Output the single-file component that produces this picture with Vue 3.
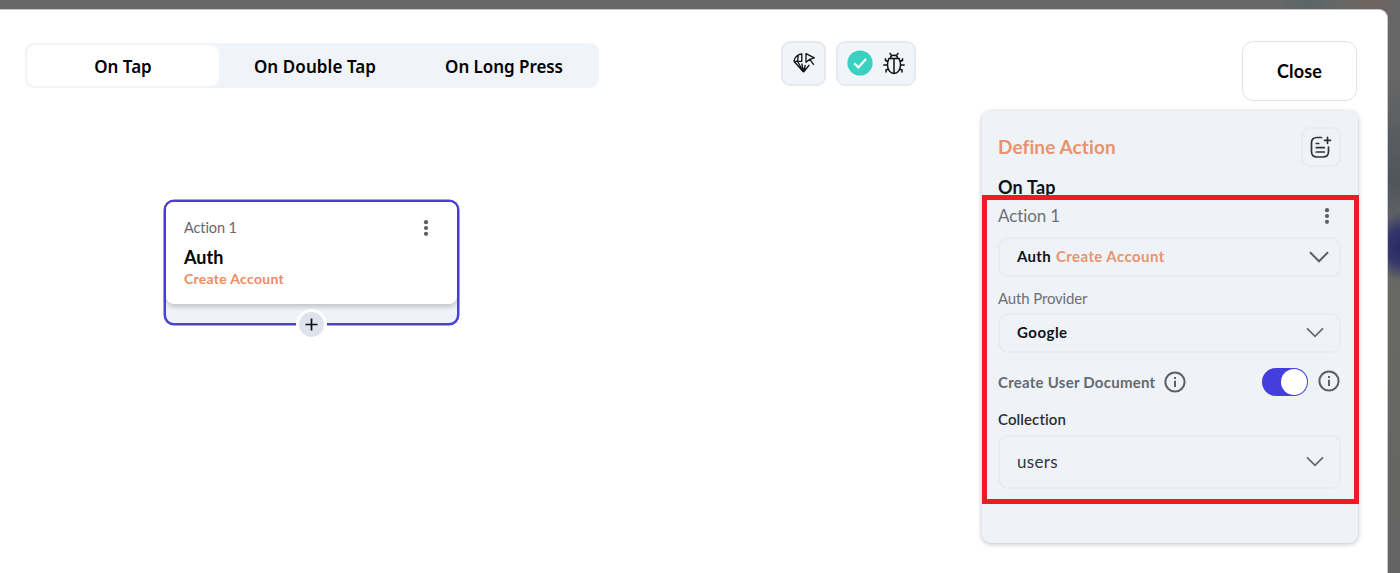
<script setup>
const tabs = ['On Tap', 'On Double Tap', 'On Long Press']
</script>

<template>
  <div class="backdrop">
    <main class="modal">
      <section class="canvas">
        <div class="toolbar">
          <nav class="tabs">
            <button v-for="(tab, i) in tabs" :key="tab" :class="['tab', 'tab-' + i, { active: i === 0 }]"><span>{{ tab }}</span></button>
          </nav>
          <button class="tool single">
            <svg width="24" height="24" viewBox="0 0 24 24" fill="none" stroke="#111" stroke-width="1.300" stroke-linejoin="round">
              <path d="M9.800 10.300V3C5.600 3.300 2.600 6.500 2 10.300zM6.300 4.600 5.500 10.300M2 10.300 11.500 21M5.500 10.300 11.500 21M9.800 12.500l1.700 8.500M13.300 14 11.500 21M17.300 14 11.500 21" />
              <path d="M14 2.700 22.300 6.900 17.800 8.300 14 11.300zM17.800 8.300 21.800 13.800" />
              <path d="M8 17.300 11.500 18l3.500-.7-3.500 4.200z" fill="#111" stroke="none" />
            </svg>
          </button>
          <div class="tool status">
            <svg width="26" height="26" viewBox="0 0 26 26" fill="none">
              <circle cx="13" cy="13" r="12.600" fill="#39d2c0" />
              <path d="M7.200 13.200l4.200 4.200 7.600-8.300" stroke="#fff" stroke-width="2.200" />
            </svg>
            <svg width="24" height="24" viewBox="0 0 24 24" fill="none" stroke="#111" stroke-width="1.500" stroke-linecap="round">
              <path d="M7 7.500h10c1.400 2.300 1.500 4.600 1.500 6.500 0 5-3 8.500-6.500 8.500S5.500 19 5.500 14c0-1.900.1-4.200 1.500-6.500zM8.500 7.300C8.500 5.200 9.700 4.300 12 4.300s3.500.9 3.500 3M12 8v14M9.500 4.500 8 2.300M14.500 4.500 16 2.300M5.800 10.500 3.500 9.500V7.800M18.200 10.500l2.300-1V7.800M5.500 14H1.800M18.500 14h3.700M6.500 18 4 19v2M17.500 18l2.500 1v2" />
            </svg>
          </div>
        </div>

        <article class="node">
          <div class="node-card">
            <div class="node-top">
              <span class="node-index">Action 1</span>
              <svg width="6" height="18" viewBox="0 0 6 18" fill="#5c6066"><circle cx="3" cy="3.200" r="2.100" /><circle cx="3" cy="9" r="2.100" /><circle cx="3" cy="14.800" r="2.100" /></svg>
            </div>
            <div class="node-title"><span>Auth</span></div>
            <div class="node-sub"><span>Create Account</span></div>
          </div>
          <button class="add">
            <svg width="13" height="13" viewBox="0 0 13 13" stroke="#111" stroke-width="1.700"><path d="M6.500 .5v12M.5 6.500h12" /></svg>
          </button>
        </article>
      </section>

      <aside class="side">
        <button class="close"><span>Close</span></button>
        <div class="panel">
          <header class="panel-head">
            <h2>Define Action</h2>
            <button class="doc">
              <svg width="22" height="24" viewBox="0 0 22 24" fill="none" stroke="#303236" stroke-width="1.700" stroke-linecap="round">
                <path d="M11.500 2.500H7C3.200 2.500 1.500 4.300 1.500 8v8.500C1.500 20.400 3.200 22 7 22h6c3.700 0 5.500-1.600 5.500-5.500V12M17.500 2.300v6M14.500 5.300h6M6.300 8.500h2.400M6.300 12.700h8M6.300 17h8" />
              </svg>
            </button>
          </header>
          <div class="trigger"><span>On Tap</span></div>
          <div class="action-row">
            <span>Action 1</span>
            <svg width="6" height="18" viewBox="0 0 6 18" fill="#5c6066"><circle cx="3" cy="3.200" r="2.100" /><circle cx="3" cy="9" r="2.100" /><circle cx="3" cy="14.800" r="2.100" /></svg>
          </div>
          <div class="select first">
            <div class="value"><span class="v-auth">Auth</span><span class="v-create">Create Account</span></div>
            <svg width="20" height="12" viewBox="0 0 20 12" fill="none" stroke="#5c6066" stroke-width="2"><path d="M1 1.300l9 9 9-9" /></svg>
          </div>
          <div class="label provider"><span>Auth Provider</span></div>
          <div class="select">
            <span class="v-google">Google</span>
            <svg width="18" height="11" viewBox="0 0 18 11" fill="none" stroke="#66696e" stroke-width="1.800"><path d="M1 1.300l8 8 8-8" /></svg>
          </div>
          <div class="toggle-row">
            <span class="t-label">Create User Document</span>
            <svg class="info" width="22" height="22" viewBox="0 0 22 22" fill="none" stroke="#5c6066" stroke-width="2"><circle cx="11" cy="11" r="9.600" /><path d="M11 9.700v6.300M11 5.900v2" /></svg>
            <div class="switch"><i /></div>
            <svg class="info end" width="22" height="22" viewBox="0 0 22 22" fill="none" stroke="#5c6066" stroke-width="2"><circle cx="11" cy="11" r="9.600" /><path d="M11 9.700v6.300M11 5.900v2" /></svg>
          </div>
          <div class="label collection"><span>Collection</span></div>
          <div class="select tall">
            <span class="v-users">users</span>
            <svg width="18" height="11" viewBox="0 0 18 11" fill="none" stroke="#66696e" stroke-width="1.800"><path d="M1 1.300l8 8 8-8" /></svg>
          </div>
          <div class="highlight" />
        </div>
      </aside>
    </main>
  </div>
</template>

<style>
body { margin: 0; overflow: hidden; }
</style>

<style scoped>
* { box-sizing: border-box; }
button { border: 0; padding: 0; margin: 0; background: none; font: inherit; color: inherit; }
svg { display: block; flex: none; }
span { white-space: nowrap; }
.backdrop {
  width: 1400px; height: 573px; padding: 9px 12px 0 0; overflow: hidden;
  font-family: Lato, "Liberation Sans", sans-serif; font-variant-ligatures: none; color: #111417;
  background:
    radial-gradient(ellipse 24px 34px at 1400px 246px, #292a62 0, #34356a 50%, transparent 100%),
    radial-gradient(ellipse 30px 16px at 1310px 3px, #596565, transparent),
    radial-gradient(ellipse 30px 16px at 1370px 3px, #70645e, transparent),
    linear-gradient(180deg, #676767 0, #666 80px, #50555a 180px, #636468 225px, #686864 300px, #646464 100%);
}
.modal {
  display: flex; width: 1388px; height: 564px; background: #fff;
  border-top: 1px solid #c9c9ca; border-right: 1px solid #c9caca; border-radius: 0 9px 0 0;
}
.canvas { width: 982px; padding: 31px 0 0 25px; }
.toolbar { display: flex; align-items: flex-start; }
.tabs {
  display: flex; width: 574px; height: 45px; margin: 2px 182px 0 0; padding: 2px;
  background: #f0f3f8; border-radius: 9px;
  font-family: "Noto Sans", sans-serif; font-weight: 600; font-size: 17px; color: #000;
}
.tab { display: flex; align-items: center; justify-content: center; width: 189px; height: 41px; padding-top: 2px; border-radius: 8px; }
.tab.active { width: 192px; background: #fff; }
.tab-1 { padding-left: 3px; letter-spacing: .08px; }
.tab-2 { padding-left: 3px; letter-spacing: -.05px; }
.tool { display: flex; align-items: center; justify-content: center; height: 45px; padding-bottom: 1px; border: 2px solid #e6eaee; border-radius: 9px; background: #f1f4f8; }
.single { width: 45px; margin-right: 10px; }
.status { width: 80px; gap: 9px; }
.node {
  position: relative; width: 295px; height: 125px; margin: 112px 0 0 139px;
  border: 2px solid #4b42d4; border-radius: 10px; background: #eff2f8;
  box-shadow: 0 0 0 .500px #4b42d4;
}
.node-card { height: 102px; padding: 17px 28px 0 18px; border-radius: 8px; background: #fff; box-shadow: 0 3px 5px rgba(0, 0, 0, .19); }
.node-top { display: flex; justify-content: space-between; align-items: center; height: 18px; }
.node-index { padding-bottom: 2px; font-size: 14.500px; letter-spacing: -.1px; color: #64676d; }
.node-title { height: 32px; padding-top: 6px; font-size: 18px; line-height: 28px; font-weight: 700; color: #000; }
.node-sub { height: 18px; line-height: 19px; font-size: 14px; letter-spacing: .28px; font-weight: 700; color: #ee8b60; }
.add {
  position: absolute; left: 130px; top: 107px; display: flex; align-items: center; justify-content: center;
  width: 31px; height: 31px; border: 3px solid #fff; border-radius: 50%; background: #dfe3eb;
}
.side { width: 376px; padding-top: 31px; }
.close { display: flex; align-items: center; justify-content: center; width: 115px; height: 60px; margin: 0 0 10px 260px; border: 1px solid #e2e3e9; border-radius: 11px; font-size: 18px; letter-spacing: .2px; font-weight: 700; color: #000; }
.panel {
  position: relative; width: 376px; height: 432px; padding: 16px 17px 0 16px;
  border-radius: 9px; background: #eff3f8; box-shadow: 0 1px 5px rgba(40, 50, 60, .32);
}
.panel-head { display: flex; align-items: center; justify-content: space-between; height: 40px; }
h2 { margin: 0; font-size: 19px; font-weight: 700; line-height: 24px; letter-spacing: .1px; color: #e8936d; white-space: nowrap; }
.doc { display: flex; align-items: center; justify-content: center; width: 40px; height: 40px; border: 2px solid #e8ebf0; border-radius: 9px; }
.trigger { height: 40px; line-height: 41px; font-size: 18px; font-weight: 700; letter-spacing: .2px; }
.action-row { display: flex; align-items: center; justify-content: space-between; height: 18px; margin-bottom: 12px; padding-right: 11px; font-size: 17px; letter-spacing: -.1px; color: #6d7075; }
.action-row span { padding-bottom: 2px; }
.select { display: flex; align-items: center; justify-content: space-between; height: 40px; padding: 0 15px 0 17px; border: 2px solid #e8ebf0; border-radius: 10px; }
.select span { padding-bottom: 2px; }
.select.first { padding-right: 10px; }
.select.tall { height: 54px; }
.select svg { margin-bottom: 1px; }
.value { display: flex; gap: 5px; font-size: 15px; font-weight: 700; }
.v-auth { letter-spacing: .3px; }
.v-create { letter-spacing: .42px; color: #e8936d; }
.v-google { font-size: 15px; font-weight: 700; letter-spacing: .5px; }
.v-users { font-size: 17px; letter-spacing: .3px; color: #33363a; }
.label { font-size: 15px; }
.provider { height: 36px; padding-top: 6px; line-height: 30px; letter-spacing: -.15px; color: #6d7075; }
.collection { height: 24px; line-height: 16px; font-weight: 600; letter-spacing: .1px; color: #292c30; }
.toggle-row { display: flex; align-items: center; height: 58px; }
.t-label { font-size: 15px; font-weight: 700; letter-spacing: .25px; color: #66696e; width: 166px; }
.switch { display: flex; justify-content: flex-end; width: 46px; height: 28px; margin-left: auto; padding: 1px; border-radius: 14px; background: #443fdc; }
.switch i { width: 26px; height: 26px; border-radius: 50%; background: #fff; }
.end { margin: -3px 1px 0 10px; }
.highlight { position: absolute; left: 0; top: 84px; width: 377px; height: 309px; border: 5px solid #ed1c24; }
</style>
